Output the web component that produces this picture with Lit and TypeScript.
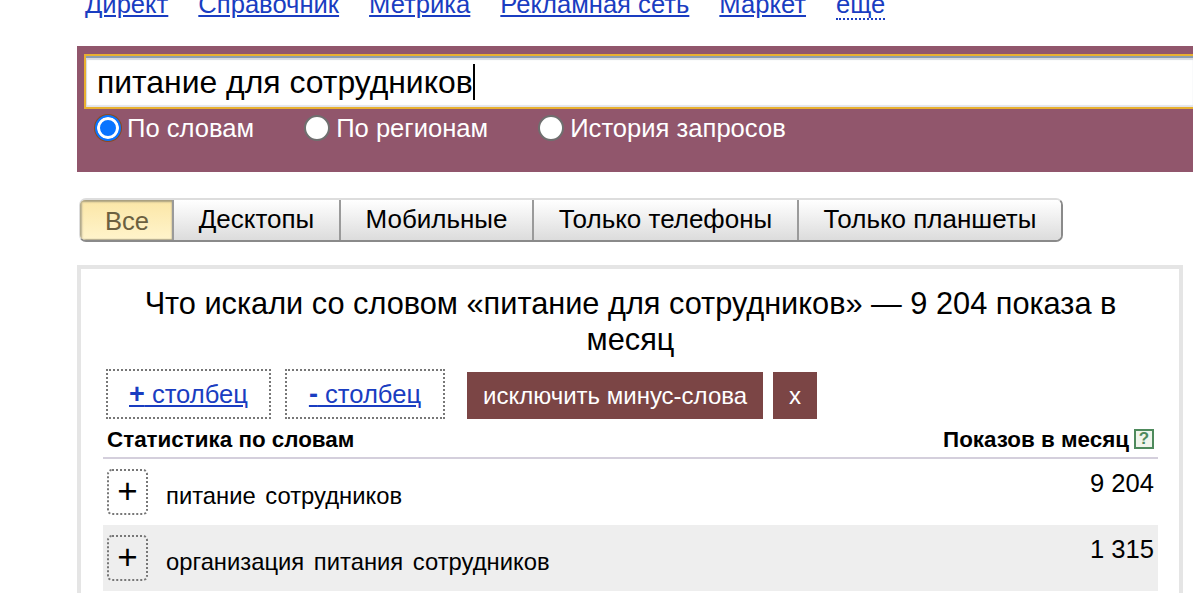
import { LitElement, html, css } from "lit";
import { customElement } from "lit/decorators.js";

const navItems = ["Директ", "Справочник", "Метрика", "Рекламная сеть", "Маркет"];
const tabs = ["Все", "Десктопы", "Мобильные", "Только телефоны", "Только планшеты"];
const rows = [
  { q: "питание сотрудников", n: "9 204" },
  { q: "организация питания сотрудников", n: "1 315" },
];

@customElement("app-root")
export class AppRoot extends LitElement {
  static styles = css`
    :host {
      display: block;
      width: 1193px;
      height: 593px;
      overflow: hidden;
      background: #fff;
      font-family: "Liberation Sans", Arial, sans-serif;
      color: #000;
    }
    a { color: #1a3dc1; text-decoration: underline; }
    .nav {
      height: 20px;
      margin-bottom: 26px;
      padding-left: 85px;
      display: flex;
      align-items: flex-end;
      gap: 30px;
      font-size: 25.6px;
      line-height: 29px;
      overflow: hidden;
    }
    .nav a { margin-bottom: 1px; }
    .nav .more { color: #1a3dc1; border-bottom: 2px dotted #1a3dc1; line-height: 27px; }
    .search {
      margin-left: 77px;
      height: 126px;
      box-sizing: border-box;
      padding: 8px 0 0 7px;
      background: #91566c;
    }
    .input {
      height: 55px;
      box-sizing: border-box;
      display: flex;
      align-items: center;
      padding: 2px 0 0 11px;
      background: #fff;
      border: 2px solid #e8b030;
      border-right: 0;
      box-shadow: inset 0 2px 0 #8b9cb0, inset 0 4px 1px #d8dadf, inset 1px 0 1px #d8dadf, inset 0 -2px 1px #e4e6ee;
      font-size: 31.9px;
    }
    .caret { width: 2px; height: 36px; background: #000; margin-top: -1px; }
    .radios {
      display: flex;
      margin-top: 5px;
      padding-left: 11px;
      font-size: 25.6px;
      color: #fff;
      line-height: 28px;
    }
    .radio { display: flex; align-items: center; gap: 6px; }
    .radio + .radio { margin-left: 50px; }
    .dot {
      width: 26px;
      height: 26px;
      box-sizing: border-box;
      border-radius: 50%;
      background: #fff;
      border: 2px solid #6f6f6f;
    }
    .dot.on {
      border: 2px solid #0a74ff;
      background: #0a74ff;
      box-shadow: inset 0 0 0 3px #fff, 0 0 0 1px #8a4a20;
    }
    .tabs-wrap { display: block; height: 93px; }
    .tabs {
      margin: 26px 0 23px 79px;
      display: inline-flex;
      height: 44px;
      box-sizing: border-box;
      border: 1px solid #ddd;
      border-top: 2px solid #ddd;
      border-bottom: 2px solid #8a8a8a;
      border-right: 2px solid #8a8a8a;
      border-radius: 7px;
      overflow: hidden;
      vertical-align: top;
    }
    .tab {
      display: flex;
      align-items: center;
      padding: 0 24.6px 2px;
      font-size: 26px;
      background: linear-gradient(#ffffff, #dcdcdc);
      border-left: 2px solid #9a9a9a;
    }
    .tab:first-child {
      border-left: 0;
      padding: 2px 23px 0 25px;
      color: #6b6040;
      font-size: 25.6px;
      background: linear-gradient(#fbe6a6, #fff4cc);
      box-shadow: inset 0 2px 2px #a89f80, inset 2px 0 2px #b5ad90, inset 0 -1px 1px #b5ad90;
    }
    .panel {
      margin-left: 77px;
      width: 1106px;
      height: 340px;
      box-sizing: border-box;
      border: 4px solid #e5e5e5;
      border-bottom: 0;
      padding: 17px 21px 0 22px;
    }
    .title {
      margin: 0;
      text-align: center;
      font-size: 30.72px;
      font-weight: 400;
      line-height: 36px;
    }
    .actions { display: flex; align-items: flex-end; margin: 12px 0 0 3px; height: 49px; }
    .dotted {
      height: 50px;
      box-sizing: border-box;
      display: flex;
      align-items: center;
      justify-content: center;
      border: 2px dotted #777;
      font-size: 25.6px;
      margin-right: 14px;
    }
    .dotted.plus { width: 165px; }
    .dotted.minus { width: 160px; margin-right: 22px; }
    .dotted b { font-weight: 700; font-size: 27px; }
    .brown {
      height: 47px;
      display: flex;
      align-items: center;
      padding: 0 16px;
      background: #7b4545;
      color: #fff;
      font-size: 24px;
      margin-right: 10px;
    }
    .head {
      display: flex;
      justify-content: space-between;
      align-items: center;
      height: 39px;
      box-sizing: border-box;
      margin-top: 1px;
      padding: 3px 4px 0 4px;
      border-bottom: 2px solid #d4cfdc;
      font-size: 22.4px;
      font-weight: 700;
    }
    .head .right { display: flex; align-items: center; gap: 5px; }
    .help {
      width: 20px;
      height: 20px;
      box-sizing: border-box;
      border: 2px solid #4e8a5c;
      color: #4e8a5c;
      background: #f0f5ec;
      font-size: 17px;
      line-height: 16px;
      text-align: center;
      margin-top: -3px;
    }
    .row {
      height: 66px;
      display: flex;
      box-sizing: border-box;
      padding: 10px 4px 0 4px;
    }
    .row:nth-child(even) { background: #eeeeee; }
    .btn {
      width: 41px;
      height: 46px;
      box-sizing: border-box;
      border: 2px dotted #777;
      border-radius: 5px;
      display: flex;
      align-items: flex-start;
      justify-content: center;
      font-size: 35px;
      line-height: 40px;
      font-weight: 400;
    }
    .q {
      flex: 1;
      margin-left: 18px;
      padding-top: 14px;
      font-size: 23.8px;
      line-height: 26px;
      word-spacing: 3px;
    }
    .n { font-size: 25.6px; line-height: 28px; }
  `;

  render() {
    return html`
      <nav class="nav">
        ${navItems.map((t) => html`<a href="#">${t}</a>`)}
        <span class="more">еще</span>
      </nav>
      <section class="search">
        <div class="input">питание для сотрудников<span class="caret"></span></div>
        <div class="radios">
          <label class="radio"><span class="dot on"></span>По словам</label>
          <label class="radio"><span class="dot"></span>По регионам</label>
          <label class="radio"><span class="dot"></span>История запросов</label>
        </div>
      </section>
      <div class="tabs-wrap">
        <div class="tabs">${tabs.map((t) => html`<div class="tab">${t}</div>`)}</div>
      </div>
      <section class="panel">
        <h1 class="title">Что искали со словом «питание для сотрудников» — 9 204 показа в месяц</h1>
        <div class="actions">
          <div class="dotted plus"><a href="#"><b>+</b> столбец</a></div>
          <div class="dotted minus"><a href="#"><b>-</b> столбец</a></div>
          <div class="brown">исключить минус-слова</div>
          <div class="brown">x</div>
        </div>
        <div class="head">
          <span>Статистика по словам</span>
          <span class="right">Показов в месяц<span class="help">?</span></span>
        </div>
        <div class="rows">
          ${rows.map(
            (r) => html`<div class="row">
              <div class="btn">+</div>
              <div class="q">${r.q}</div>
              <div class="n">${r.n}</div>
            </div>`
          )}
        </div>
      </section>
    `;
  }
}
